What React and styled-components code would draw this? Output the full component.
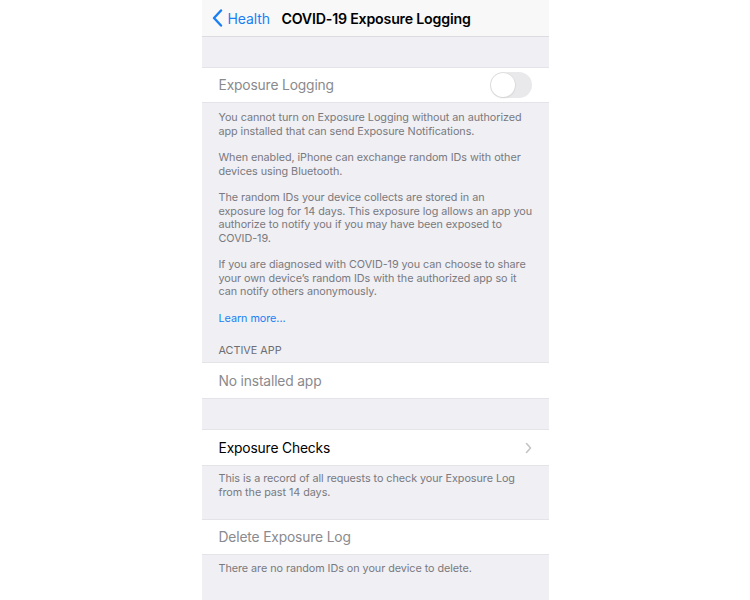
import React from 'react'
import styled, { createGlobalStyle } from 'styled-components'

const GlobalStyle = createGlobalStyle`
  body {
    margin: 0;
    background: #ffffff;
    font-family: Inter, "Noto Sans", sans-serif;
    -webkit-font-smoothing: antialiased;
  }
`

const Screen = styled.div`
  width: 347px;
  min-height: 600px;
  margin: 0 auto;
  background: #efeff4;
  display: flex;
  flex-direction: column;
`

const NavBar = styled.header`
  position: relative;
  height: 36px;
  background: #f8f8f8;
  border-bottom: 1px solid #dcdce0;
  display: flex;
  align-items: center;
  justify-content: center;
`

const BackButton = styled.a`
  position: absolute;
  left: 10px;
  top: 0;
  height: 36px;
  display: flex;
  align-items: center;
  gap: 5px;
  color: #1a7ff5;
  font-size: 14px;
  letter-spacing: -0.1px;
  text-decoration: none;
`

const Title = styled.h1`
  margin: 0 0 0 2px;
  font-size: 14.2px;
  font-weight: 600;
  color: #000;
  letter-spacing: -0.2px;
`

const Spacer = styled.div`
  height: ${props => props.h || 30}px;
`

const Cell = styled.div`
  height: ${props => props.h || 36}px;
  background: #fff;
  border-top: 1px solid #e4e4e8;
  border-bottom: 1px solid #e4e4e8;
  box-sizing: border-box;
  display: flex;
  align-items: center;
  justify-content: space-between;
  padding: 0 17px;
`

const CellLabel = styled.span`
  font-size: 13.8px;
  letter-spacing: -0.15px;
  color: ${props => props.dim ? '#8a8a8e' : '#000'};
`

const Toggle = styled.div`
  width: 42px;
  height: 26px;
  border-radius: 13px;
  background: #e9e9eb;
  position: relative;
  &::after {
    content: '';
    position: absolute;
    left: 1px;
    top: 1px;
    width: 24px;
    height: 24px;
    border-radius: 50%;
    background: #fff;
    box-shadow: 0 0 0 0.5px #d6d6d8, 0 1px 2px rgba(0, 0, 0, 0.1);
  }
`

const Footer = styled.div`
  padding: ${props => props.pad || '7px 17px 7px 17px'};
  color: #79797e;
  font-size: 10.8px;
  line-height: 13.5px;
  letter-spacing: -0.05px;
  & p {
    margin: 0 0 13px;
  }
  & p:last-child {
    margin-bottom: 0;
  }
`

const Keep = styled.span`
  white-space: nowrap;
`

const Link = styled.a`
  color: #1a7ff5;
  text-decoration: none;
`

const SectionHeader = styled.div`
  padding: 19px 17px 5px;
  color: #6d6d72;
  font-size: 10.8px;
  line-height: 13px;
  text-transform: uppercase;
`

function ChevronLeft () {
  return (
    <svg width='11' height='18' viewBox='0 0 11 18'>
      <path d='M9 1.5 L2 9 L9 16.5' fill='none' stroke='#1a7ff5' strokeWidth='2.4' strokeLinecap='round' strokeLinejoin='round' />
    </svg>
  )
}

function ChevronRight () {
  return (
    <svg width='7' height='12' viewBox='0 0 7 12'>
      <path d='M1.5 1.5 L5.5 6 L1.5 10.5' fill='none' stroke='#c4c4c7' strokeWidth='1.6' strokeLinecap='round' strokeLinejoin='round' />
    </svg>
  )
}

export default function App () {
  return (
    <>
      <GlobalStyle />
      <Screen>
        <NavBar>
          <BackButton><ChevronLeft />Health</BackButton>
          <Title>COVID-19 Exposure Logging</Title>
        </NavBar>
        <Spacer h={30} />
        <Cell h={36}>
          <CellLabel dim>Exposure Logging</CellLabel>
          <Toggle />
        </Cell>
        <Footer pad='8px 17px 0 17px'>
          <p>You cannot turn on Exposure Logging without an authorized app installed that can send Exposure Notifications.</p>
          <p>When enabled, iPhone can exchange random IDs with other devices using Bluetooth.</p>
          <p>The random IDs your device collects are stored in an <Keep>exposure log for 14 days. This exposure log allows an app you</Keep> authorize to notify you if you may have been exposed to COVID-19.</p>
          <p>If you are diagnosed with COVID-19 you can choose to share your own device’s random IDs with the authorized app so it can notify others anonymously.</p>
          <p><Link>Learn more...</Link></p>
        </Footer>
        <SectionHeader>Active App</SectionHeader>
        <Cell h={37}>
          <CellLabel dim>No installed app</CellLabel>
        </Cell>
        <Spacer h={30} />
        <Cell h={37}>
          <CellLabel>Exposure Checks</CellLabel>
          <ChevronRight />
        </Cell>
        <Footer pad='6px 17px 20px 17px'>
          <p>This is a record of all requests to check your Exposure Log from the past 14 days.</p>
        </Footer>
        <Cell h={36}>
          <CellLabel dim>Delete Exposure Log</CellLabel>
        </Cell>
        <Footer pad='7px 17px 20px 17px'>
          <p>There are no random IDs on your device to delete.</p>
        </Footer>
      </Screen>
    </>
  )
}
